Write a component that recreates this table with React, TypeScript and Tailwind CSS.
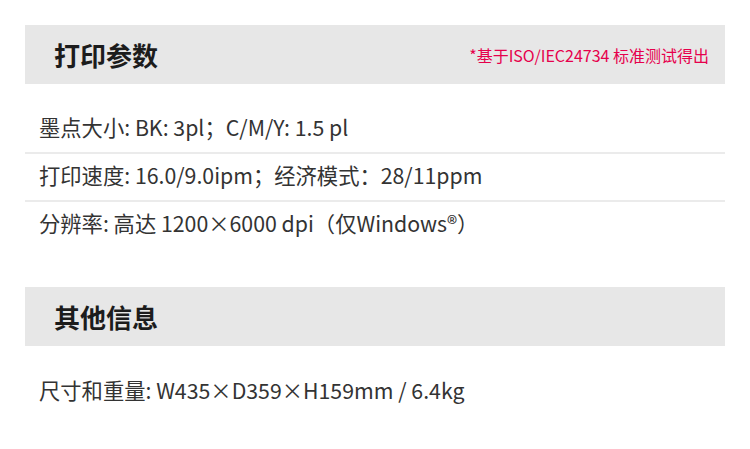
import React from "react";

const font = { fontFamily: '"Noto Sans CJK SC", "Noto Sans", sans-serif' };

function Header({ title, note }: { title: string; note?: string }) {
  return (
    <div className="flex h-[59px] items-center justify-between bg-[#e7e7e7] pl-[29px] pr-[16px]">
      <div className="text-[26px] font-bold leading-none text-[#1c1c1c]">{title}</div>
      {note && <div className="text-[16px] font-normal leading-none text-[#e6004c]">{note}</div>}
    </div>
  );
}

function Row({ children, line }: { children: React.ReactNode; line?: boolean }) {
  return (
    <div className={`pl-[14px] pt-[6px] pb-[10px] text-[21.3px] font-normal leading-[30px] text-[#333333] ${line ? "border-b-2 border-[#ebebeb]" : ""}`}>
      {children}
    </div>
  );
}

export default function App() {
  return (
    <div className="h-[449px] w-[750px] bg-white px-[25px] pt-[25px]" style={font}>
      <Header title="打印参数" note="*基于ISO/IEC24734 标准测试得出" />
      <div className="pt-[22px]">
        <Row line>墨点大小: BK: 3pl；C/M/Y: 1.5 pl</Row>
        <Row line>打印速度: 16.0/9.0ipm；经济模式：28/11ppm</Row>
        <Row>分辨率: 高达 1200×6000 dpi（仅Windows®）</Row>
      </div>
      <div className="mt-[39px]">
        <Header title="其他信息" />
      </div>
      <div className="pt-[23px]">
        <Row>尺寸和重量: W435×D359×H159mm / 6.4kg</Row>
      </div>
    </div>
  );
}
